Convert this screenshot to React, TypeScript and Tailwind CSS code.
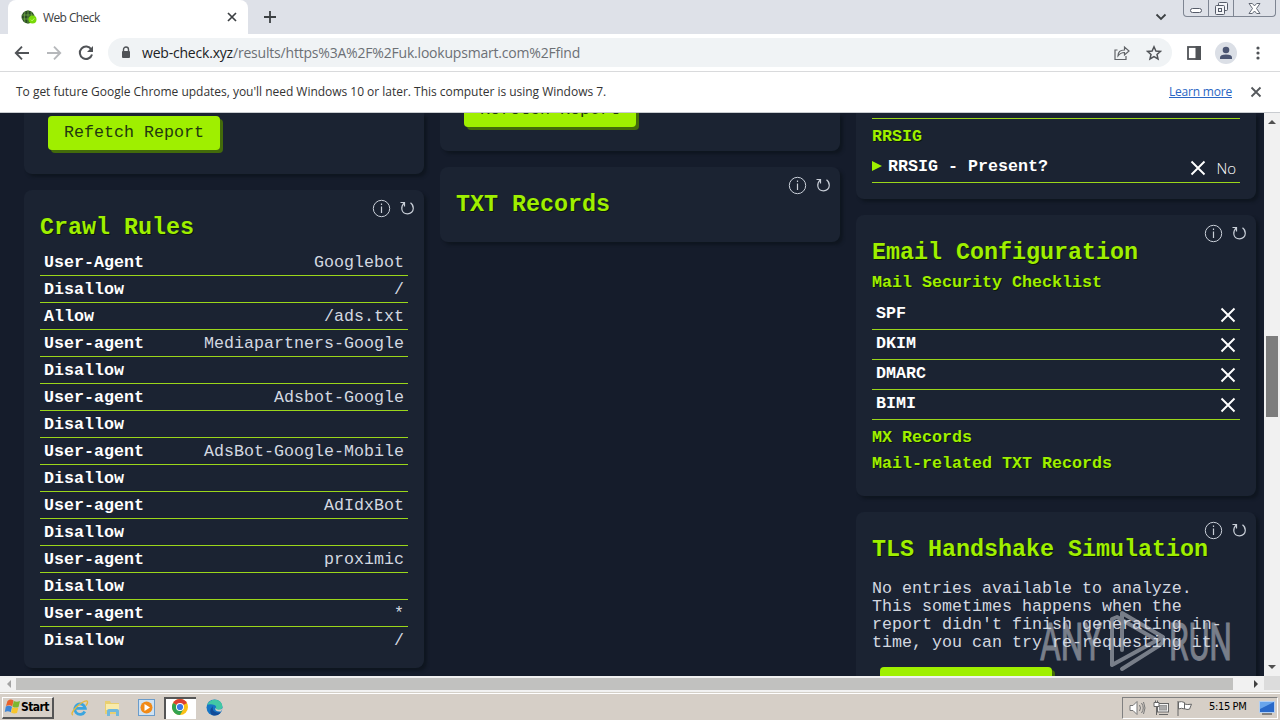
import type { ReactNode } from "react";
import clsx from "clsx";

const crawlRules = [
  ["User-Agent", "Googlebot"],
  ["Disallow", "/"],
  ["Allow", "/ads.txt"],
  ["User-agent", "Mediapartners-Google"],
  ["Disallow", ""],
  ["User-agent", "Adsbot-Google"],
  ["Disallow", ""],
  ["User-agent", "AdsBot-Google-Mobile"],
  ["Disallow", ""],
  ["User-agent", "AdIdxBot"],
  ["Disallow", ""],
  ["User-agent", "proximic"],
  ["Disallow", ""],
  ["User-agent", "*"],
  ["Disallow", "/"],
];

const mailChecks = ["SPF", "DKIM", "DMARC", "BIMI"];

function Cross() {
  return (
    <svg width="16" height="16" viewBox="0 0 16 16" stroke="#fff" strokeWidth="1.9" fill="none">
      <path d="M1.5 1.5l13 13M14.5 1.5l-13 13" />
    </svg>
  );
}

function CardActions() {
  return (
    <div className="absolute right-[9px] top-[9px] flex items-center gap-[8px]">
      <svg width="19" height="19" viewBox="0 0 19 19" fill="none" stroke="#c9cfd8">
        <circle cx="9.5" cy="9.5" r="8.2" />
        <path d="M9.5 7.5V14M9.5 4.6V6" strokeWidth="1.2" />
      </svg>
      <svg width="16" height="19" viewBox="0 0 16 19" fill="none" stroke="#c9cfd8" strokeWidth="1.2">
        <path d="M1.5 3.5H5.500V7.500" />
        <path d="M5.500 3.500C3.500 5.500 2.500 7.500 2.800 10C3.200 13 5.500 14.900 8.500 14.900C11.800 14.900 14.300 12.500 14.300 9.300C14.300 7 13.400 5.200 11.500 3.800" />
      </svg>
    </div>
  );
}

function Card({ className, children, actions = true }: { className: string; children?: ReactNode; actions?: boolean }) {
  return (
    <section className={clsx("relative w-[400px] shrink-0 bg-[#1b2332] px-4 shadow-[3px_3px_3px_#0f1620]", className)}>
      {actions && <CardActions />}
      {children}
    </section>
  );
}

function Title({ children }: { children: ReactNode }) {
  return (
    <h2 className="h-8 whitespace-nowrap text-[23.33px] font-semibold leading-8 text-[#9fef00] [text-shadow:1px_1px_0_#0b1a05]">
      {children}
    </h2>
  );
}

function SubTitle({ children }: { children: ReactNode }) {
  return (
    <h3 className="h-[26px] whitespace-nowrap text-[16.67px] font-bold leading-[28px] text-[#9fef00] [text-shadow:1px_1px_0_#0b1a05]">
      {children}
    </h3>
  );
}

function RefetchButton() {
  return (
    <button className="h-[34px] w-[172px] shrink-0 whitespace-nowrap rounded bg-[#9fef00] text-[16.67px] leading-[34px] text-[#22390f] shadow-[3px_3px_0_#436b0a]">
      Refetch Report
    </button>
  );
}

function TabStrip() {
  return (
    <div className="flex h-[34px] bg-[#dee1e8] pl-2">
      <div className="flex w-[240px] items-center rounded-t-lg bg-white pl-[13px] pr-[10px]">
        <svg width="16" height="16" viewBox="0 0 16 16">
          <circle cx="7" cy="8" r="6.5" fill="#294b22" />
          <path d="M1 6h12M1 10h12M7 1v14M4 2.5Q2.5 8 4 13.5M10 2.5Q11.5 8 10 13.5" stroke="#6fa844" strokeWidth=".8" fill="none" />
          <circle cx="11.5" cy="10.5" r="4" fill="#78d908" />
          <path d="M9.8 10.6l1.3 1.3 2.2-2.6" stroke="#b8ff62" fill="none" />
        </svg>
        <span className="ml-[6px] flex-1 pt-px text-[12px] tracking-[-0.6px] text-[#3c4043]">Web Check</span>
        <svg width="12" height="12" viewBox="0 0 12 12" stroke="#3c4043" strokeWidth="1.7">
          <path d="M2 2l8 8M10 2l-8 8" />
        </svg>
      </div>
      <svg className="ml-[15px] mt-[10px]" width="14" height="14" viewBox="0 0 14 14" stroke="#3c4043" strokeWidth="1.8">
        <path d="M7 1v12M1 7h12" />
      </svg>
      <svg className="ml-auto mr-[16px] mt-[13px]" width="12" height="8" viewBox="0 0 12 8" fill="none" stroke="#3c4043" strokeWidth="1.8">
        <path d="M1.5 1.5L6 6l4.5-4.5" />
      </svg>
      <div className="mr-[4px] flex h-[17px] w-[93px] rounded-b border border-t-0 border-[#7e8592]">
        <div className="flex w-[25px] justify-center border-r border-[#7e8592] pt-[8px]">
          <div className="h-[5px] w-[12px] rounded-sm border border-[#555b68] bg-white" />
        </div>
        <div className="flex w-[25px] justify-center border-r border-[#7e8592] pt-[2px]">
          <svg width="13" height="13" viewBox="0 0 13 13" fill="#f3f4f7" stroke="#555b68">
            <rect x="3.5" y=".5" width="9" height="8" rx="1" />
            <rect x=".5" y="3.5" width="9" height="9" rx="1" />
            <rect x="3.5" y="6.5" width="3" height="3" />
          </svg>
        </div>
        <div className="flex flex-1 justify-center pt-[3px]">
          <svg width="13" height="11" viewBox="0 0 13 11" fill="#fff" stroke="#555b68" strokeWidth=".9">
            <path d="M1 .5h3.3l2.2 2.4L8.700.5H12L8.500 5.500 12 10.500H8.700L6.500 8 4.300 10.500H1L4.500 5.500z" />
          </svg>
        </div>
      </div>
    </div>
  );
}

function Toolbar() {
  return (
    <div className="flex h-[38px] items-center border-b border-[#d9dadc] bg-white pl-[14px]">
      <svg width="16" height="16" viewBox="0 0 16 16" fill="none" stroke="#505357" strokeWidth="1.9">
        <path d="M15 8H2.500M8 1.700L1.800 8 8 14.300" />
      </svg>
      <svg className="ml-4" width="16" height="16" viewBox="0 0 16 16" fill="none" stroke="#b6b8bb" strokeWidth="1.9">
        <path d="M1 8h12.500M8 1.700L14.200 8 8 14.300" />
      </svg>
      <svg className="ml-4" width="16" height="16" viewBox="0 0 16 16" fill="none" stroke="#505357" strokeWidth="2">
        <path d="M13.300 4.500A6.200 6.200 0 1 0 14 9.500" />
        <path d="M15 1v6H9z" fill="#505357" stroke="none" />
      </svg>
      <div className="ml-[14px] flex h-[29px] w-[1064px] items-center rounded-full bg-[#f0f3f5] pl-[13px] pr-[10px]">
        <svg width="10" height="13" viewBox="0 0 10 13">
          <path d="M2.500 6V3.500a2.500 2.500 0 0 1 5 0V6" fill="none" stroke="#505357" strokeWidth="1.400" />
          <rect x="1" y="5" width="8" height="7" rx="1" fill="#505357" />
        </svg>
        <span className="ml-[11px] flex-1 whitespace-nowrap text-[14px] tracking-[-0.2px] text-[#6c7075]">
          <span className="text-[#202124]">web-check.xyz</span>/results/https%3A%2F%2Fuk.lookupsmart.com%2Ffind
        </span>
        <svg width="16" height="16" viewBox="0 0 16 16" fill="none" stroke="#606367" strokeWidth="1.200">
          <path d="M3.500 5H1v9.500h11V11" />
          <path d="M4 11Q4 5 10.500 5V2L15 6l-4.500 4V7.500Q6.500 7.500 4 11z" />
        </svg>
        <svg className="ml-4" width="16" height="16" viewBox="0 0 16 16" fill="none" stroke="#505357" strokeWidth="1.500">
          <path d="M8 1.800l1.900 4.200 4.500.4-3.400 3 1 4.500L8 11.500l-4 2.400 1-4.500-3.400-3 4.500-.4z" />
        </svg>
      </div>
      <svg className="ml-[15px]" width="14" height="14" viewBox="0 0 14 14">
        <rect x="1" y="1" width="12" height="12" fill="none" stroke="#505357" strokeWidth="1.800" />
        <rect x="8.500" y="0" width="5.500" height="14" fill="#505357" />
      </svg>
      <svg className="ml-[14px]" width="22" height="22" viewBox="0 0 22 22">
        <circle cx="11" cy="11" r="11" fill="#dbdfe6" />
        <circle cx="11" cy="8" r="3.300" fill="#4b5572" />
        <path d="M5 17v-1.500Q5 12.500 11 12.500t6 3V17z" fill="#4b5572" />
      </svg>
      <svg className="ml-[19px]" width="4" height="14" viewBox="0 0 4 14" fill="#505357">
        <circle cx="2" cy="2" r="1.600" />
        <circle cx="2" cy="7" r="1.600" />
        <circle cx="2" cy="12" r="1.600" />
      </svg>
    </div>
  );
}

function InfoBar() {
  return (
    <div className="flex h-[41px] items-center border-b border-[#c9ccd0] bg-white pl-4 pr-[18px] text-[12px]">
      <span className="flex-1 whitespace-nowrap tracking-[-0.02px] text-[#333]">
        To get future Google Chrome updates, you'll need Windows 10 or later. This computer is using Windows 7.
      </span>
      <a className="mr-[18px] tracking-[-0.2px] text-[#2a66c4] underline">Learn more</a>
      <svg width="12" height="12" viewBox="0 0 12 12" stroke="#55585c" strokeWidth="1.800">
        <path d="M1.500 1.500l9 9M10.500 1.500l-9 9" />
      </svg>
    </div>
  );
}

function Watermark() {
  return (
    <svg className="absolute left-[1036px] top-[604px]" width="200" height="72" viewBox="0 0 200 72" opacity=".5">
      <g fill="#d5d9e0" stroke="#d5d9e0" strokeWidth="1" fontFamily="Roboto, sans-serif" fontSize="52">
        <text x="4" y="56" textLength="62" lengthAdjust="spacingAndGlyphs">ANY</text>
        <text x="133" y="56" textLength="63" lengthAdjust="spacingAndGlyphs">RUN</text>
      </g>
      <g fill="none" stroke="#d5d9e0" strokeWidth="4" strokeLinejoin="round" strokeLinecap="round">
        <path d="M86 46V9l41 24-51 28V15l5-2 38 22" />
        <path d="M86 65l38-24q5-4 2-8" />
      </g>
    </svg>
  );
}

function Page() {
  return (
    <main className="flex h-[563px] w-[1264px] gap-4 overflow-hidden bg-[#151c2b] pl-6 font-['Liberation_Mono',monospace] text-[16.67px] text-white">
      <div className="flex flex-col gap-4">
        <Card className="h-[61px] rounded-b-lg pl-6 pt-[3px]" actions={false}>
          <RefetchButton />
        </Card>
        <Card className="h-[478px] rounded-lg pt-[22px]">
          <Title>Crawl Rules</Title>
          <div className="mt-[5px]">
            {crawlRules.map(([name, value], i) => (
              <div
                key={i}
                className="flex h-[27px] justify-between border-b border-[#9bd61a] px-1 leading-[27px] last:border-b-0"
              >
                <span className="font-bold">{name}</span>
                <span className="text-[#d3d8e0]">{value}</span>
              </div>
            ))}
          </div>
        </Card>
      </div>

      <div className="flex flex-col gap-4">
        <Card className="flex h-[38px] flex-col justify-end rounded-b-lg pb-6 pl-6" actions={false}>
          <RefetchButton />
        </Card>
        <Card className="h-[75px] rounded-lg pt-[22px]">
          <Title>TXT Records</Title>
        </Card>
      </div>

      <div className="flex flex-col gap-4">
        <Card className="h-[86px] rounded-b-lg pt-[5px]" actions={false}>
          <div className="border-t border-[#9bd61a] pt-[4px]">
            <SubTitle>RRSIG</SubTitle>
          </div>
          <div className="flex h-[34px] items-center border-b border-[#9bd61a] pr-1">
            <svg width="10" height="10" viewBox="0 0 10 10" fill="#9fef00">
              <path d="M0 0l10 5-10 5z" />
            </svg>
            <span className="ml-[6px] flex-1 pt-px font-bold">RRSIG - Present?</span>
            <div className="flex items-center gap-[10px] pt-1">
              <Cross />
              <span className="font-['Open_Sans',sans-serif] text-[15px] font-light leading-5">No</span>
            </div>
          </div>
        </Card>
        <Card className="h-[281px] rounded-lg pt-[22px]">
          <Title>Email Configuration</Title>
          <SubTitle>Mail Security Checklist</SubTitle>
          <div className="mb-[4px] mt-[5px]">
            {mailChecks.map((check) => (
              <div key={check} className="flex h-[30px] items-center justify-between border-b border-[#9bd61a] px-1">
                <span className="pb-[3px] font-bold">{check}</span>
                <Cross />
              </div>
            ))}
          </div>
          <SubTitle>MX Records</SubTitle>
          <SubTitle>Mail-related TXT Records</SubTitle>
        </Card>
        <Card className="h-[260px] rounded-t-lg pt-[22px]">
          <Title>TLS Handshake Simulation</Title>
          <p className="mb-[15px] mt-[14px] whitespace-nowrap leading-[18px] text-[#d3d8e0]">
            No entries available to analyze.
            <br />
            This sometimes happens when the
            <br />
            report didn't finish generating in-
            <br />
            time, you can try re-requesting it.
          </p>
          <div className="pl-2">
            <RefetchButton />
          </div>
        </Card>
      </div>
    </main>
  );
}

function VerticalScrollbar() {
  return (
    <div className="flex h-[563px] w-4 flex-col items-center bg-[#f1f1f1]">
      <svg className="mt-[6px]" width="8" height="5" viewBox="0 0 8 5" fill="#505050">
        <path d="M0 5l4-4 4 4z" />
      </svg>
      <div className="mt-[212px] h-[81px] w-3 bg-[#7d7d7d]" />
      <svg className="mb-[6px] mt-auto" width="8" height="5" viewBox="0 0 8 5" fill="#505050">
        <path d="M0 0l4 4 4-4z" />
      </svg>
    </div>
  );
}

function HorizontalScrollbar() {
  return (
    <div className="flex h-4 bg-[#f1f1f1]">
      <div className="flex w-4 justify-center pt-[4px]">
        <svg width="5" height="8" viewBox="0 0 5 8" fill="#a3a3a3">
          <path d="M5 0L1 4l4 4z" />
        </svg>
      </div>
      <div className="mt-[2px] h-3 w-[1217px] bg-[#c1c1bf]" />
      <div className="flex flex-1 justify-end pr-[5px] pt-[4px]">
        <svg width="5" height="8" viewBox="0 0 5 8" fill="#404040">
          <path d="M0 0l4 4-4 4z" />
        </svg>
      </div>
      <div className="h-[14px] w-4 bg-[#dcdcdc]" />
    </div>
  );
}

function Taskbar() {
  return (
    <footer className="flex h-7 items-center border-t border-[#d4d0c8] bg-[#d6cfc7] pl-[2px] pt-[2px] text-black shadow-[inset_0_1px_0_#fff]">
      <div className="flex h-[22px] w-[52px] items-center border border-b-2 border-r-2 border-b-[#555] border-l-white border-r-[#555] border-t-white pl-px">
        <svg width="17" height="16" viewBox="0 0 17 16">
          <path d="M3.500 2q3-2.500 6-.5L8.300 7.200Q5.500 5.200 2 7z" fill="#e9602a" />
          <path d="M9.800 2q3 1.500 6.200 0L14.500 8q-3 1.300-6-.3z" fill="#7db72f" />
          <path d="M1.800 7.500q3-1.500 6.200.2l-1.200 5.500Q4 11.500.8 13z" fill="#3e85d6" />
          <path d="M8.400 8.200q2.800 1.500 6 .3L13 14q-3 1.200-5.900-.5z" fill="#f7c52d" />
        </svg>
        <span className="font-['DejaVu_Sans_Condensed','DejaVu_Sans',sans-serif] text-[12px] font-bold tracking-[-0.6px]">Start</span>
      </div>
      <svg className="ml-[17px]" width="18" height="18" viewBox="0 0 18 18" fill="none">
        <path d="M13.800 12.500A5.300 5.300 0 1 1 14.300 9.300H5" stroke="#3ba5df" strokeWidth="2.800" />
        <path d="M2 16Q-1 15 5 8.500 13 1 16 2q1.500 1-1 4.500" stroke="#e7b83b" strokeWidth="1.400" />
      </svg>
      <svg className="ml-[15px]" width="17" height="18" viewBox="0 0 17 18">
        <path d="M1 2h5l1 2h8v11H1z" fill="#e9cf70" />
        <path d="M2 5h13v6H2z" fill="#f9ebaa" />
        <path d="M3 17v-5q0-2 2-2h8q2 0 2 2v5h-3v-4H6v4z" fill="#71b9dd" />
      </svg>
      <svg className="ml-[17px]" width="17" height="17" viewBox="0 0 17 17">
        <rect x=".5" y=".5" width="16" height="16" fill="#cfe2f2" stroke="#6a9ccb" />
        <circle cx="8.500" cy="8.500" r="6" fill="#f18a17" />
        <path d="M6.500 5l5.500 3.500-5.500 3.500z" fill="#fff" />
      </svg>
      <div className="ml-[9px] flex h-[22px] w-[32px] items-center justify-center border-l-2 border-t-2 border-[#555] bg-white pb-[3px] pr-[3px]">
        <svg width="16" height="16" viewBox="0 0 16 16">
          <circle cx="8" cy="8" r="8" fill="#fbc116" />
          <path d="M8 8L1.070 4A8 8 0 0 1 14.930 4z" fill="#dd4032" />
          <path d="M8 8L1.070 4A8 8 0 0 0 8 16l3.500-6z" fill="#32a350" />
          <circle cx="8" cy="8" r="4" fill="#fff" />
          <circle cx="8" cy="8" r="3.100" fill="#3b78e7" />
        </svg>
      </div>
      <svg className="ml-[10px]" width="17" height="17" viewBox="0 0 17 17">
        <circle cx="8.500" cy="8.500" r="8" fill="#1675c5" />
        <path d="M1 6Q4 0 10 .7q6 1 6.500 7-.5 3.300-4.500 3.300-2.500 0-2-1.500Q11 6 6.500 5.500 3 5 1 6z" fill="#42c8a5" />
        <path d="M7 7q-2 7 8 6.500Q11 18 6 16 2 12 7 7z" fill="#124b98" />
        <path d="M9.500 8.500q-1.500 4.500 5.500 4l2-3.500q-1.500 2-5 1.800-2.500-.3-2.500-2.300z" fill="#d6cfc7" />
      </svg>
      <div className="ml-auto mr-[2px] flex h-[22px] w-[156px] items-center border border-b-white border-l-[#808080] border-r-white border-t-[#808080] pl-[6px]">
        <svg width="17" height="16" viewBox="0 0 17 16" fill="none" stroke="#777">
          <path d="M1 5.500h3l4-4v13l-4-4H1z" fill="#fff" />
          <path d="M10.500 5q2 3 0 6M12.500 3q3.500 5 0 10M14.500 2q3 6 0 12" />
        </svg>
        <svg className="ml-[7px]" width="17" height="16" viewBox="0 0 17 16" fill="#fff" stroke="#666">
          <rect x="4.500" y="3.500" width="11" height="8.500" fill="#f4f4f4" />
          <rect x="6.500" y="5.500" width="7" height="4.500" fill="#aaa" stroke="#999" />
          <path d="M6 14.500h9M1 2.500h5v4H1zM2.500 .5v2M4.500 .5v2M3.500 6.500V15" />
        </svg>
        <svg className="ml-[6px]" width="17" height="16" viewBox="0 0 17 16" fill="#fff" stroke="#666">
          <path d="M2 1v15M2.500 2q3-1 6 .5V9q-3-1.500-6 0zM8.500 4q3 1 7 .2l-2 5q-2.500.8-5-.5z" />
        </svg>
        <span className="ml-[16px] flex-1 whitespace-nowrap font-['DejaVu_Sans_Condensed','DejaVu_Sans',sans-serif] text-[11px] tracking-[-0.35px]">5:15 PM</span>
        <svg className="mr-[2px]" width="16" height="14" viewBox="0 0 16 14">
          <rect x=".5" y=".5" width="15" height="11" fill="#2969c9" stroke="#b3cff1" />
          <path d="M1 1h14L1 8z" fill="#68a5ec" />
          <path d="M3 13h10" stroke="#333" />
        </svg>
      </div>
    </footer>
  );
}

export default function App() {
  return (
    <div className="relative h-[720px] w-[1280px] overflow-hidden bg-white font-['Open_Sans',sans-serif]">
      <TabStrip />
      <Toolbar />
      <InfoBar />
      <div className="flex">
        <Page />
        <VerticalScrollbar />
      </div>
      <HorizontalScrollbar />
      <Taskbar />
      <Watermark />
    </div>
  );
}
